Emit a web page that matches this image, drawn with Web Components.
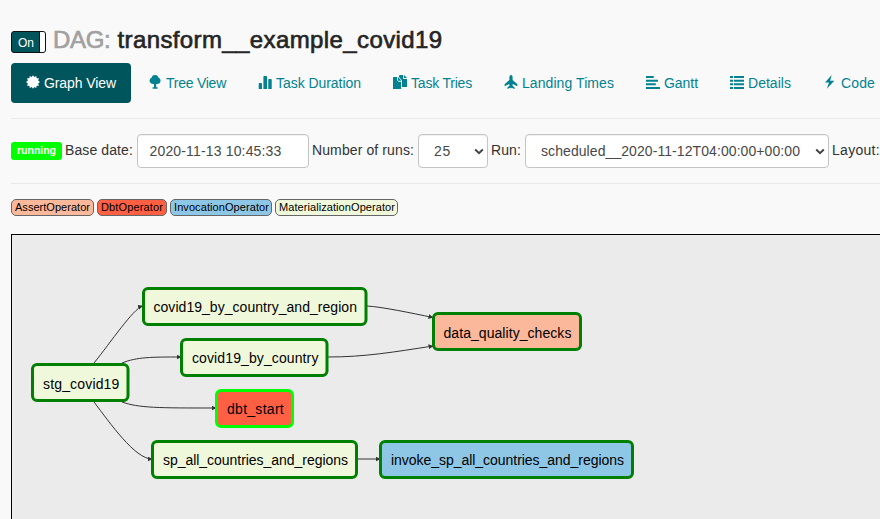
<!DOCTYPE html>
<html lang="en">
<head>
<meta charset="utf-8">
<title>DAG: transform__example_covid19</title>
<style>
html, body { margin: 0; height: 100%; overflow: hidden; }
body { background: #f9f9f9; color: #333; font: 14px/20px "Liberation Sans", Arial, sans-serif; }
</style>
</head>
<body>
<dag-page></dag-page>
<script>
const define = (name, html, ready) => {
  const template = document.createElement('template');
  template.innerHTML = html;
  customElements.define(name, class extends HTMLElement {
    constructor() {
      super();
      this.attachShadow({ mode: 'open' }).append(template.content.cloneNode(true));
    }
    connectedCallback() { if (ready) ready(this, this.shadowRoot); }
  });
};

/* Text that is tracked so that it fills the width in its "w" attribute. */
define('fit-text', `<style>:host{display:block;white-space:nowrap;flex:none}span{display:inline-block}</style><span><slot></slot></span>`,
  (el, root) => {
    const w = +el.getAttribute('w');
    el.style.width = w + 'px';
    const span = root.querySelector('span');
    const natural = span.getBoundingClientRect().width;
    span.style.letterSpacing = (w - natural) / el.textContent.length + 'px';
  });

const icons = {
  sun: '<path d="M7 .2 8.3 2.1 10.3.9 10.6 3.2 13 3.3 12.1 5.5 14 7 12.1 8.5 13 10.7 10.6 10.8 10.3 13.1 8.3 11.9 7 13.8 5.7 11.9 3.7 13.1 3.4 10.8 1 10.7 1.9 8.5 0 7 1.9 5.5 1 3.3 3.4 3.2 3.7.9 5.7 2.1Z"/>',
  tree: '<path d="M7 0C9 0 10.4 1.2 10.5 2.8C12 3.4 12.7 4.5 12.5 6C12.4 8 10.7 9.3 8.2 8.9V12.3H9.6V13.8H4.6V12.3H6V8.9C3.5 9.3 1.8 8 1.6 6.1C1.5 4.5 2.2 3.4 3.6 2.8C3.8 1.2 5 0 7 0Z"/>',
  stats: '<path d="M1.4 8H3.2Q4 8 4 8.8V14H.7V8.8Q.7 8 1.4 8ZM6 1H8.2Q9 1 9 1.8V14H5.4V1.8Q5.4 1 6 1ZM11 4H13Q13.7 4 13.7 4.8V14H10.3V4.8Q10.3 4 11 4Z"/>',
  copy: '<path d="M0 2H4.2V5.2L5.5 6.7H8V14H0ZM5 2 8.4 5.8H5ZM6.7 0H10.2V4H14V12H9V5.5L6 2V.7ZM11.1 0 14 3H11.1Z"/>',
  plane: '<path d="M7 0C8.1.2 8.7 1.4 8.6 2.6V5L13.4 9.3V11.2L8.7 8.9 8.5 10.8 10.6 12.4V14L7.6 12.7 7 13.4 6.4 12.7 3.4 14V12.4L5.5 10.8 5.3 8.9.6 11.2V9.3L5.4 5V2.6C5.3 1.4 5.9.2 7 0Z"/>',
  left: '<path d="M0 1H7.7V3H0ZM0 4.7H12V6.7H0ZM0 8.3H9.8V10.2H0ZM0 12H14V14H0Z"/>',
  list: '<path d="M0 1H3V3H0ZM4 1H14V3H4ZM0 4.7H3V6.7H0ZM4 4.7H14V6.7H4ZM0 8.3H3V10.3H0ZM4 8.3H14V10.3H4ZM0 12H3V14H0ZM4 12H14V14H4Z"/>',
  flash: '<path d="M8.7 0 2 7.6H6L3.8 13.8 11.3 5.8H7.1Z"/>'
};

define('glyph-icon', `<style>:host{display:block;width:14px;height:14px;flex:none}svg{display:block;overflow:visible;fill:currentColor}</style><svg width="14" height="14" viewBox="0 0 14 14"></svg>`,
  (el, root) => { root.querySelector('svg').innerHTML = icons[el.getAttribute('name')]; });

define('on-switch', `<style>
:host{display:flex;box-sizing:border-box;width:35px;height:22px;border:1px solid #111;border-radius:3px;background:#00545b;color:#fff;font-size:12px;line-height:20px;overflow:hidden}
fit-text{margin:1px 0 0 6px}
i{width:5px;margin-left:auto;background:#fff;border-left:1px solid #111}
</style><fit-text w="16">On</fit-text><i></i>`);

define('form-box', `<style>
:host{display:flex;box-sizing:border-box;height:34px;padding:6px 3px 6px 11.500px;border:1px solid #c4c4c4;border-radius:4px;background:#fff;color:#484848;flex:none;box-shadow:inset 0 1px 1px rgba(0,0,0,.06)}
:host([select]){padding-left:15px}
svg{display:none;margin:7px 0 0 auto}
:host([select]) svg{display:block}
</style><slot></slot><svg width="10" height="8" viewBox="0 0 10 8"><path d="M1.2 1.5 5 5.2 8.8 1.5" fill="none" stroke="#444" stroke-width="2"/></svg>`);

define('status-label', `<style>:host{display:block;box-sizing:border-box;width:51px;height:18px;padding:0 6px;border-radius:3px;background:#0f0;color:#fff;font-weight:bold;font-size:10.5px;line-height:17px;flex:none}</style><slot></slot>`);

define('operator-tag', `<style>:host{display:block;box-sizing:border-box;height:17px;padding:0 3px;border:1px solid #666;border-radius:5px;color:#000;font-size:11px;line-height:15px;flex:none}</style><slot></slot>`);

define('dag-node', `<style>
:host{position:absolute;display:flex;justify-content:center;color:#000;line-height:40px}
svg{position:absolute;inset:0;width:100%;height:100%;overflow:visible}
fit-text{position:relative;padding-left:2px}
:host([low]) fit-text{padding-top:1px}
</style><svg><rect x="1.5" y="1.5" rx="4.5" stroke-width="3"/></svg><fit-text></fit-text>`,
  (el, root) => {
    const [x, y, w, h] = el.getAttribute('box').split(' ').map(Number);
    Object.assign(el.style, { left: x + 'px', top: y + 'px', width: w + 'px', height: h + 'px' });
    const rect = root.querySelector('rect');
    rect.setAttribute('width', w - 3);
    rect.setAttribute('height', h - 3);
    rect.setAttribute('fill', el.getAttribute('fill'));
    rect.setAttribute('stroke', el.getAttribute('stroke') || '#008000');
    const text = document.createElement('fit-text');
    text.setAttribute('w', w - 22);
    text.textContent = el.getAttribute('label');
    root.querySelector('fit-text').replaceWith(text);
  });

/* Node and edge coordinates are relative to the canvas corner inside its border. */
define('dag-graph', `<style>
:host{display:block;position:relative;box-sizing:border-box;border:solid #000;border-width:1px 0 0 1px;background:#ebebeb;overflow:hidden}
.edges{position:absolute;left:0;top:0;fill:none;stroke:#333;stroke-width:1}
</style>
<svg class="edges" width="868" height="300" viewBox="12 235 868 300">
<defs><marker id="arrow" viewBox="0 0 5 5" refX="4.5" refY="2.5" markerWidth="5" markerHeight="5" orient="auto"><path d="M0 0 5 2.5 0 5Z" fill="#333" stroke="none"/></marker></defs>
<path marker-end="url(#arrow)" d="M94 363C111 342 133 309 142.500 306"/>
<path marker-end="url(#arrow)" d="M122 363C137 357 151 357 181 357"/>
<path marker-end="url(#arrow)" d="M122 402C139 408 158 408 216 408"/>
<path marker-end="url(#arrow)" d="M94 402C110 423 135 459 152 459"/>
<path marker-end="url(#arrow)" d="M367 306C383 307 411 313 433 317.500"/>
<path marker-end="url(#arrow)" d="M328 357C365 357 394 352 433 346"/>
<path marker-end="url(#arrow)" d="M358 459H380"/>
</svg>
<dag-node box="19 128 98.500 39" low fill="#f0f8db" label="stg_covid19"></dag-node>
<dag-node box="129.500 51.700 225.500 39" fill="#f0f8db" label="covid19_by_country_and_region"></dag-node>
<dag-node box="168 102.500 148.500 39" fill="#f0f8db" label="covid19_by_country"></dag-node>
<dag-node box="419.500 77 150 39" low fill="#fcb89b" label="data_quality_checks"></dag-node>
<dag-node box="203 153.500 79 39" fill="#ff5f43" stroke="#00ff00" label="dbt_start"></dag-node>
<dag-node box="139 204.500 207 39" fill="#f0f8db" label="sp_all_countries_and_regions"></dag-node>
<dag-node box="367 204.500 255 39" fill="#8ec6e6" label="invoke_sp_all_countries_and_regions"></dag-node>`);

define('tab-item', `<style>
:host{display:flex;box-sizing:border-box;height:40px;padding:10px 15px;gap:4px;flex:none;border-radius:4px;color:#028291}
:host([active]){background:#00545b;color:#fff}
div{margin-top:2px}
</style><div></div><slot></slot>`,
  (el, root) => {
    const icon = document.createElement('glyph-icon');
    icon.setAttribute('name', el.getAttribute('icon'));
    root.querySelector('div').replaceChildren(icon);
  });

define('dag-page', `<style>
:host{display:flex;flex-direction:column;box-sizing:border-box;height:519px;padding:24px 0 0 11px;overflow:hidden}
header{display:flex;height:39px;gap:7px;flex:none}
on-switch{margin-top:7px}
h3{display:flex;margin:0;font-size:24px;font-weight:normal;line-height:31px;gap:7px;color:#252525;-webkit-text-stroke:.65px currentColor}
h3 .kind{color:#a0a0a0}
nav{display:flex;gap:2px;height:40px;flex:none}
hr{width:100%;height:1px;margin:0;border:0;background:#e9e9e9;flex:none}
form{display:flex;height:34px;align-items:center;margin:15px 0;flex:none}
form > fit-text{padding-bottom:2px}
section{display:flex;gap:3px;margin:15px 0 18px;flex:none}
dag-graph{flex:1}
</style>
<header><on-switch></on-switch><h3><fit-text class="kind" w="57.500">DAG:</fit-text><fit-text w="325">transform__example_covid19</fit-text></h3></header>
<nav>
<tab-item icon="sun" active><fit-text w="72">Graph View</fit-text></tab-item>
<tab-item icon="tree"><fit-text w="60">Tree View</fit-text></tab-item>
<tab-item icon="stats"><fit-text w="85">Task Duration</fit-text></tab-item>
<tab-item icon="copy"><fit-text w="61">Task Tries</fit-text></tab-item>
<tab-item icon="plane"><fit-text w="92">Landing Times</fit-text></tab-item>
<tab-item icon="left"><fit-text w="34">Gantt</fit-text></tab-item>
<tab-item icon="list"><fit-text w="43">Details</fit-text></tab-item>
<tab-item icon="flash"><fit-text w="34">Code</fit-text></tab-item>
</nav>
<hr style="margin-top:15px">
<form>
<status-label><fit-text w="39">running</fit-text></status-label>
<fit-text w="68" style="margin-left:3px;margin-right:4px">Base date:</fit-text>
<form-box style="width:172px"><fit-text w="132">2020-11-13 10:45:33</fit-text></form-box>
<fit-text w="102" style="margin-left:3px;margin-right:4px">Number of runs:</fit-text>
<form-box select style="width:70px"><fit-text w="17">25</fit-text></form-box>
<fit-text w="30" style="margin-left:3px;margin-right:4px">Run:</fit-text>
<form-box select style="width:304px"><fit-text w="259">scheduled__2020-11-12T04:00:00+00:00</fit-text></form-box>
<fit-text w="48" style="margin-left:3px">Layout:</fit-text>
</form>
<hr>
<section>
<operator-tag style="width:83px;background:#fcb89b"><fit-text w="75">AssertOperator</fit-text></operator-tag>
<operator-tag style="width:70px;background:#ff5f43"><fit-text w="62">DbtOperator</fit-text></operator-tag>
<operator-tag style="width:102px;background:#8ec6e6"><fit-text w="95">InvocationOperator</fit-text></operator-tag>
<operator-tag style="width:123px;background:#f0f8db"><fit-text w="116">MaterializationOperator</fit-text></operator-tag>
</section>
<dag-graph></dag-graph>`);
</script>
</body>
</html>
